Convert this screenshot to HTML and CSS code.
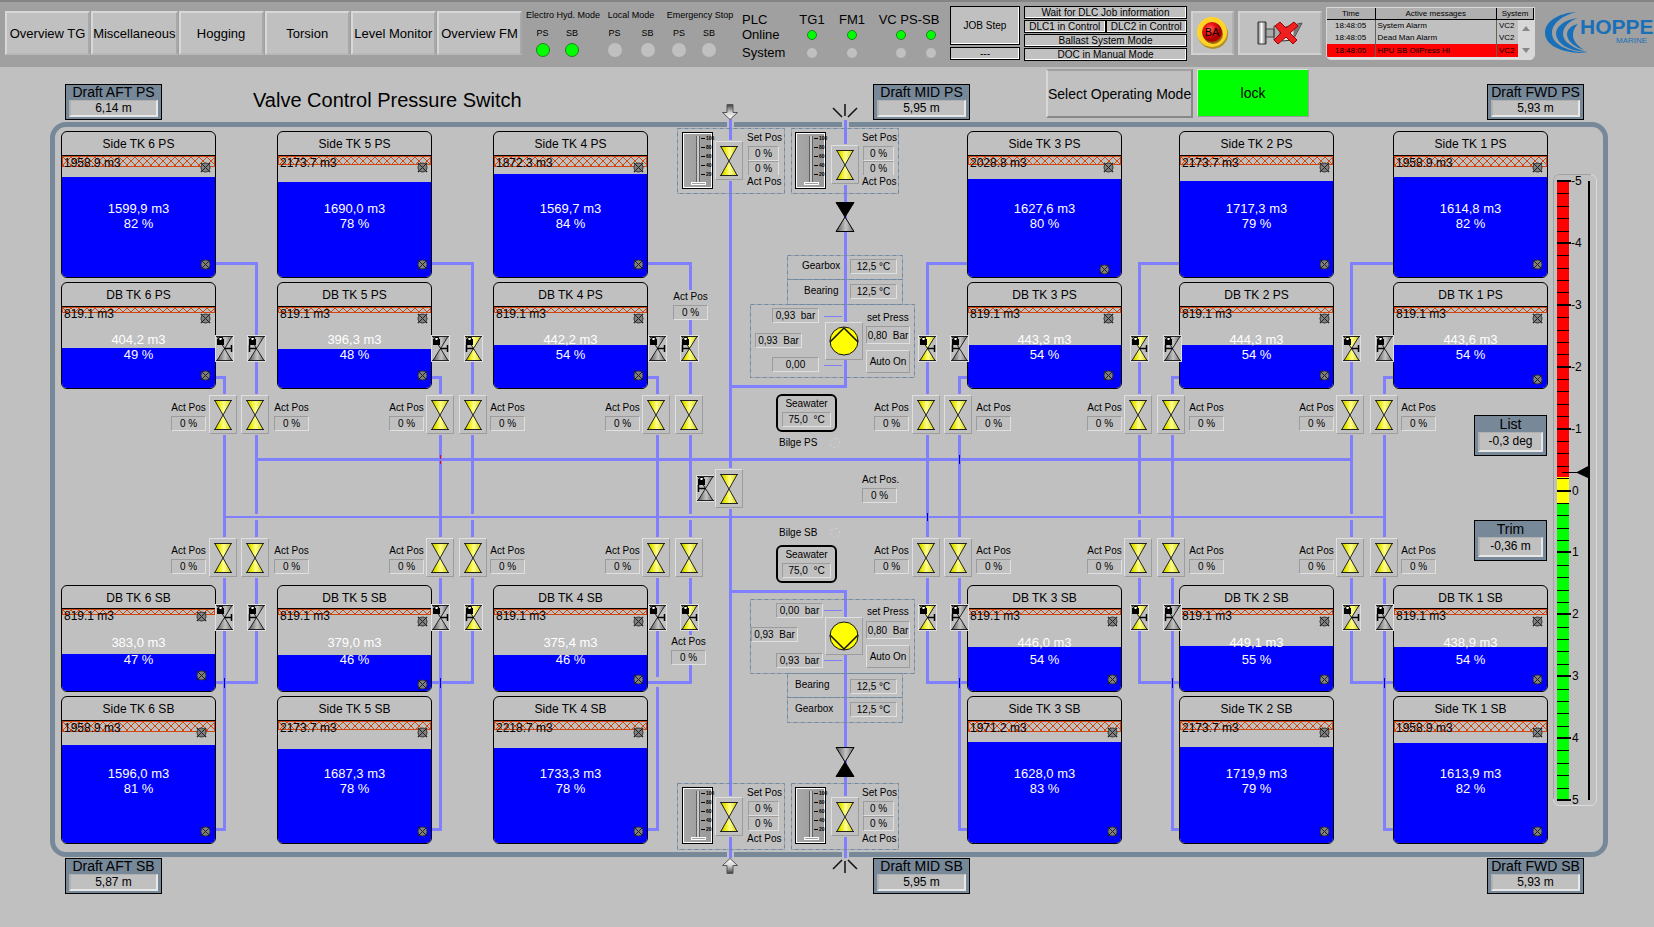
FILE: index.html
```html
<!DOCTYPE html>
<html lang="en">
<head>
<meta charset="utf-8">
<title>Valve Control Pressure Switch</title>
<link rel="stylesheet" href="styles.css">
</head>
<body>
<svg class="defs" width="0" height="0" aria-hidden="true">
  <defs>
    <linearGradient id="g-yellow"><stop offset="0" stop-color="#b8b800"/><stop offset=".25" stop-color="#e8e800"/><stop offset=".55" stop-color="#ffff90"/><stop offset="1" stop-color="#d0d000"/></linearGradient>
    <linearGradient id="g-gray"><stop offset="0" stop-color="#585858"/><stop offset=".55" stop-color="#c4c4c4"/><stop offset="1" stop-color="#707070"/></linearGradient>
    <linearGradient id="g-arrow" x2="0" y2="1"><stop offset="0" stop-color="#404040"/><stop offset=".55" stop-color="#d8d8d8"/><stop offset="1" stop-color="#ffffff"/></linearGradient>
    <linearGradient id="g-arrow-up" x2="0" y2="1"><stop offset="0" stop-color="#ffffff"/><stop offset=".45" stop-color="#d8d8d8"/><stop offset="1" stop-color="#404040"/></linearGradient>
    <linearGradient id="g-horn"><stop offset="0" stop-color="#777"/><stop offset=".45" stop-color="#fff"/><stop offset="1" stop-color="#666"/></linearGradient>
    <radialGradient id="g-red" cx=".4" cy=".35"><stop offset="0" stop-color="#ff7060"/><stop offset=".5" stop-color="#f01818"/><stop offset="1" stop-color="#b00000"/></radialGradient>
    <pattern id="cross" width="8" height="8" patternUnits="userSpaceOnUse"><path d="M0 0l8 8M8 0l-8 8" stroke="#d04810"/></pattern>
  </defs>
</svg>

<header class="topbar">
  <nav class="tabs">
    <button>Overview TG</button>
    <button>Miscellaneous</button>
    <button>Hogging</button>
    <button>Torsion</button>
    <button>Level Monitor</button>
    <button>Overview FM</button>
  </nav>

  <div class="modes">
    <div class="mode electro"><h2>Electro Hyd. Mode</h2>
      <div class="lamp-col">PS<i class="lamp on"></i></div><div class="lamp-col">SB<i class="lamp on"></i></div></div>
    <div class="mode local"><h2>Local Mode</h2>
      <div class="lamp-col">PS<i class="lamp"></i></div><div class="lamp-col">SB<i class="lamp"></i></div></div>
    <div class="mode stop"><h2>Emergency Stop</h2>
      <div class="lamp-col">PS<i class="lamp"></i></div><div class="lamp-col">SB<i class="lamp"></i></div></div>
  </div>

  <table class="plc">
    <thead><tr><th>PLC</th><th>TG1</th><th>FM1</th><th>VC PS-SB</th></tr></thead>
    <tbody>
      <tr><th>Online</th><td><i class="lamp small on"></i></td><td><i class="lamp small on"></i></td><td class="pair"><i class="lamp small on"></i><i class="lamp small on"></i></td></tr>
      <tr><th>System</th><td><i class="lamp small"></i></td><td><i class="lamp small"></i></td><td class="pair"><i class="lamp small"></i><i class="lamp small"></i></td></tr>
    </tbody>
  </table>

  <div class="job">
    <button class="cell job-step">JOB Step</button>
    <div class="cell">---</div>
  </div>

  <div class="dlc">
    <div class="cell wide">Wait for DLC Job information</div>
    <div class="cell">DLC1 in Control</div>
    <div class="cell">DLC2 in Control</div>
    <div class="cell wide">Ballast System Mode</div>
    <div class="cell wide">DOC in Manual Mode</div>
  </div>

  <button class="raised ba" aria-label="BA">
    <svg width="34" height="34" viewBox="0 0 34 34"><circle cx="17" cy="18" r="15" fill="#b09020"/><circle cx="16" cy="16" r="15" fill="#ffd428"/><circle cx="17" cy="18" r="10" fill="#a06010"/><circle cx="16" cy="16" r="10" fill="url(#g-red)"/><text x="16" y="20" text-anchor="middle" class="ba-text">BA</text></svg>
  </button>

  <button class="raised horn" aria-label="Silence horn">
    <svg width="50" height="28" viewBox="0 0 50 28">
      <path d="M3 3h8v22h-8z" fill="url(#g-horn)" stroke="#333"/>
      <path d="M11 10h8v8h-8zM19 7h6v14h-6z" fill="#aaa" stroke="#444"/>
      <path d="M27 9l20-5-9 17-11 1z" fill="#e4e4e4" stroke="#333"/>
      <path d="M39 7l8-3-9 17z" fill="#777"/>
      <path d="M20 7l5-4 6 6 8-6 4 4-8 7 7 7-4 4-7-7-8 7-4-4 7-7z" fill="#f02020" stroke="#a00000"/>
    </svg>
  </button>

  <div class="messages">
    <table>
      <thead><tr><th class="c-time">Time</th><th>Active messages</th><th class="c-sys">System</th></tr></thead>
      <tbody>
        <tr><td>18:48:05</td><td>System Alarm</td><td>VC2</td></tr>
        <tr><td>18:48:05</td><td>Dead Man Alarm</td><td>VC2</td></tr>
        <tr class="alarm"><td>18:48:05</td><td>HPU SB OilPress HI</td><td>VC2</td></tr>
      </tbody>
    </table>
    <div class="scroller"><button aria-label="Scroll up"></button><button class="down" aria-label="Scroll down"></button></div>
  </div>

  <div class="logo">
    <svg width="46" height="42" viewBox="0 0 46 42"><g fill="#1a70b8">
      <path d="M32 0C12 1 0 10 0 21c0 12 16 21 44 20C24 40 7 33 7 21 7 11 18 3 32 0z"/>
      <path d="M33 6C18 8 11 15 11 22c1 10 13 17 31 18-14-4-24-10-24-18 0-7 6-13 15-16z"/>
      <path d="M33 12c-8 2-11 6-11 11 1 7 8 12 17 15-7-5-11-9-11-15 0-5 2-8 5-11z"/></g></svg>
    <div class="logo-text"><strong>HOPPE</strong><span>MARINE</span></div>
  </div>
</header>

<main>
  <section class="row-top">
    <div class="draft"><h2>Draft AFT PS</h2><output>6,14 m</output></div>
    <h1>Valve Control Pressure Switch</h1>
    <div class="draft"><h2>Draft MID PS</h2><output>5,95 m</output></div>
    <div class="mode-buttons"><button class="raised select-mode">Select Operating Mode</button><button class="raised lock">lock</button></div>
    <div class="draft"><h2>Draft FWD PS</h2><output>5,93 m</output></div>
  </section>

  <section class="hull" id="hull">
    <svg class="pipes" id="pipes" viewBox="55 127 1548 725" preserveAspectRatio="none" aria-hidden="true"></svg>
  </section>

  <section class="row-bottom">
    <div class="draft"><h2>Draft AFT SB</h2><output>5,87 m</output></div>
    <div class="draft"><h2>Draft MID SB</h2><output>5,95 m</output></div>
    <div class="draft"><h2>Draft FWD SB</h2><output>5,93 m</output></div>
  </section>
</main>
<script src="mimic.js"></script>
</body>
</html>
```
FILE: styles.css
```css
:root {
  --bg: #c0c0c0;
  --bar: #a0a0a0;
  --slate: #778899;
  --pipe: #8080ff;
  --light: #e0e0e0;
  --dark: #9c9c9c;
}

* { box-sizing: border-box; }

body {
  margin: 0;
  background: var(--bg);
  color: #000;
  font-family: "Liberation Sans", Arial, sans-serif;
  font-size: 10px;
  overflow-x: hidden;
}

h1, h2, h3, p { margin: 0; font-weight: normal; }

button, input {
  font: inherit;
  color: inherit;
  margin: 0;
  padding: 0;
  border-radius: 0;
}

svg { display: block; }
.defs { position: absolute; }

.raised, .tabs button, .valve, .pump {
  background: var(--bg);
  border: 1px solid;
  border-color: var(--light) var(--dark) var(--dark) var(--light);
}

/* ---- top bar ---- */
.topbar {
  display: grid;
  grid-template-columns: minmax(517px, 1fr) 212px 204px 70px 163px 43px 84px 209px 115px;
  gap: 4px;
  align-items: center;
  min-height: 67px;
  padding: 0 0 3px 5px;
  border-top: 2px solid #848484;
  background: var(--bar);
}

.tabs { display: grid; grid-template-columns: repeat(6, 1fr); gap: 1px; }
.tabs button {
  height: 44px;
  border-width: 2px;
  font-size: 13px;
  white-space: nowrap;
  border-color: #d8d8d8 #a8a8a8 #b8b8b8 #d8d8d8;
}

.modes { display: flex; font-size: 9px; line-height: 12px; }
.mode { display: grid; row-gap: 6px; }
.electro { grid-template-columns: 33px 26px 13px; }
.local { grid-template-columns: 33px 33px; }
.stop { grid-template-columns: 30px 30px 12px; }
.mode h2 { grid-column: 1 / -1; font-size: 9px; white-space: nowrap; text-align: center; }
.lamp-col { display: grid; justify-items: center; gap: 4px; }
.lamp {
  display: inline-block;
  width: 14px;
  height: 14px;
  border-radius: 50%;
  background: var(--bg);
}
.lamp.small { width: 10px; height: 10px; vertical-align: middle; }
.lamp.on { background: #00ff00; border: 1px solid #208020; }

.plc { border-collapse: collapse; font-size: 13px; line-height: 15px; table-layout: fixed; width: 204px; margin-top: 5px; }
.plc th, .plc td { padding: 0; font-weight: normal; text-align: center; white-space: nowrap; }
.plc th:first-child { text-align: left; width: 50px; }
.plc thead th:nth-child(2), .plc thead th:nth-child(3) { width: 40px; }
.plc tbody tr:last-child > * { padding-top: 3px; }
.plc .pair { padding-left: 14px; }
.plc .pair .lamp:first-child { margin-right: 20px; }

.cell {
  display: flex;
  align-items: center;
  justify-content: center;
  height: 13px;
  background: var(--bg);
  border: 1px solid #000;
  box-shadow: inset -1px -1px #fff;
  white-space: nowrap;
  font-size: 10px;
}
.job { display: grid; gap: 2px; }
.job-step { height: 39px; }
.dlc { display: grid; grid-template-columns: 1fr 1fr; row-gap: 1px; }
.dlc .wide { grid-column: 1 / 3; }

.ba, .horn { display: flex; align-items: center; justify-content: center; height: 44px; border-width: 2px; border-color: #d0d0d0 #b0b0b0 #d0d0d0 #d0d0d0; }
.ba-text { font-size: 11px; }

.messages {
  display: flex;
  height: 53px;
  background: #e0e0e0;
  border: 1px solid #d8d8d8;
  border-radius: 0 0 5px 5px;
  overflow: hidden;
  position: relative;
}
.messages table { width: 100%; height: 49px; border-collapse: collapse; table-layout: fixed; font-size: 8px; line-height: 11px; }
.messages th, .messages td { padding: 0 2px; height: 12px; border-right: 1px solid #606060; background: var(--bg); white-space: nowrap; overflow: hidden; }
.messages th { background: #b0b0b0; border-bottom: 1px solid #000; border-right-color: #000; font-weight: normal; }
.messages td:first-child { padding-left: 8px; }
.messages .c-time { width: 48px; }
.messages .c-sys { width: 37px; }
.messages .alarm td { background: #ff0000; }
.scroller {
  position: absolute;
  right: 0;
  top: 12px;
  bottom: 0;
  width: 16px;
  display: flex;
  flex-direction: column;
  justify-content: space-between;
  align-items: center;
  padding: 6px 0;
  background: #d8d8d8;
}
.scroller button { width: 0; height: 0; border: 4px solid transparent; border-top: 0; border-bottom: 5px solid #888; background: none; }
.scroller .down { border-top: 5px solid #888; border-bottom: 0; }

.logo { display: flex; align-items: center; padding-left: 6px; overflow: hidden; color: #1a70b8; }
.logo svg { flex: none; }
.logo-text { display: grid; margin-left: -11px; padding-bottom: 4px; }
.logo-text strong { font-size: 21px; line-height: 20px; }
.logo-text span { font-size: 8px; line-height: 8px; padding-left: 36px; }

/* ---- rows above and below the hull ---- */
.row-top, .row-bottom { display: grid; padding: 0 70px 0 65px; justify-items: start; }
.row-top { grid-template-columns: 188fr 620fr 173fr 441fr 97px; height: 55px; align-items: end; padding-bottom: 2px; }
.row-bottom { grid-template-columns: 808fr 614fr 97px; padding-top: 1px; padding-bottom: 33px; }
h1 { font-size: 20px; line-height: 22px; padding-bottom: 9px; white-space: nowrap; }

.draft {
  width: 97px;
  padding: 0 3px 2px;
  background: var(--slate);
  border: 1px solid #000;
  text-align: center;
}
.draft h2 { font-size: 14px; line-height: 15px; white-space: nowrap; }
.draft output {
  display: block;
  height: 17px;
  font-size: 12px;
  line-height: 14px;
  background: var(--bg);
  border: 2px solid;
  border-color: #b0b0b0 #e8e8e8 #e8e8e8 #b0b0b0;
  border-top-width: 1px;
}
.draft.narrow { width: 73px; padding-bottom: 3px; }
.draft.narrow h2 { line-height: 16px; }
.draft.narrow output { height: 20px; line-height: 17px; }

.mode-buttons { display: flex; gap: 4px; align-self: start; padding-top: 2px; font-size: 14px; }
.select-mode { width: 147px; height: 49px; border-width: 2px; white-space: nowrap; border-color: #a0a0a0 #888 #888 #d8d8d8; }
.lock { width: 112px; height: 48px; background: #00ff00; }

/* ---- hull mimic ---- */
.hull {
  position: relative;
  height: 735px;
  margin: 0 46px 0 50px;
  border: 5px solid var(--slate);
  border-radius: 16px;
}
.pipes { position: absolute; inset: 0; width: 100%; height: 100%; overflow: visible; fill: none; stroke: var(--pipe); stroke-width: 3; }
.pipes .thin { stroke-width: 2; }
.pipes .hair { stroke-width: 1; }
.pipes .gap { stroke: var(--bg); stroke-width: 4; }
.pipes .notch { stroke: var(--bg); stroke-width: 5; }
.pipes .tick { stroke: #0000c0; stroke-width: 1; }
.pipes .tick.red { stroke: #ff0000; stroke-dasharray: 4 2; }
.pipes .frame { stroke: #7088a0; stroke-width: 1; stroke-dasharray: 4 1 1 1; }

.node { position: absolute; }

.tank {
  width: 155px;
  height: 147px;
  background: var(--bg);
  border: 1px solid #000;
  border-radius: 6px;
  overflow: hidden;
  font-size: 12px;
}
.tank.side.sb { height: 148px; }
.tank.db { height: 107px; }
.tank h3 { height: 24px; border-bottom: 1px solid #000; font-size: 12px; line-height: 24px; text-align: center; }
.tank-body { position: relative; height: 121px; }
.side.sb .tank-body { height: 122px; }
.tank.db .tank-body { height: 81px; }
.db.sb h3 { height: 23px; }
.tank.db.sb .tank-body { height: 82px; }
.hatch { display: block; width: 100%; height: 11px; border: 1px solid #d04810; }
.hatch.mid { height: 9px; }
.hatch.slim { height: 6px; }
.capacity { position: absolute; left: 2px; top: -1px; line-height: 16px; }
.fill { position: absolute; left: 0; right: 0; bottom: 0; background: #0000ff; }
.reading { position: absolute; left: 0; right: 0; top: 45px; font-size: 13px; line-height: 15px; color: #fff; text-align: center; }
.db .reading { top: 25px; }
.db.sb .reading { line-height: 17px; }

.valve { display: flex; align-items: center; justify-content: center; width: 28px; height: 39px; box-shadow: 0 0 0 1px var(--bg); }
.lockvalve { width: 19px; height: 27px; background: var(--bg); border: 1px solid var(--light); display: flex; align-items: center; justify-content: center; }
.pump { display: flex; align-items: center; justify-content: center; width: 38px; height: 38px; }

.label { line-height: 14px; white-space: pre; background: var(--bg); }
.value {
  width: 47px;
  height: 15px;
  line-height: 13px;
  background: var(--bg);
  border: 1px solid;
  border-color: var(--dark) var(--light) var(--light) var(--dark);
  text-align: center;
  white-space: pre;
  display: block;
}
.value.small { width: 31px; }
.value.tall { width: 44px; height: 18px; line-height: 16px; }
.auto { width: 44px; height: 23px; }
.readout { width: 35px; display: grid; gap: 1px; background: var(--bg); }
.readout .label { text-align: center; }
.readout .value { width: 35px; }

.seawater { width: 61px; height: 38px; padding: 1px 4px; border: 2px solid #000; border-radius: 6px; text-align: center; }
.seawater .value { width: 49px; margin-top: 1px; }
.bilge-lamp { width: 10px; height: 10px; border: 1px dashed #d0d0d0; border-radius: 50%; }

.slider {
  display: flex;
  width: 31px;
  height: 57px;
  border: 1px solid #000;
  box-shadow: inset -1px -1px #fff, inset 1px 1px #fff;
  background: linear-gradient(90deg, #a8a8a8, #989898);
}
.slider input {
  appearance: none;
  writing-mode: vertical-lr;
  direction: rtl;
  width: 16px;
  height: 49px;
  margin: 3px 0 0 7px;
  background: linear-gradient(90deg, transparent 6px, #606060 6px 7px, #c8c8c8 7px 9px, #606060 9px 10px, transparent 10px);
}
.slider input::-webkit-slider-thumb { appearance: none; width: 15px; height: 3px; background: #a0a0a0; border: 1px solid #fff; }
.scale { display: flex; flex-direction: column; margin-left: -5px; padding-top: 1px; font-size: 5px; line-height: 9px; font-weight: bold; }
.scale span { display: flex; align-items: center; height: 9px; }
.scale span::before { content: ""; width: 4px; height: 1px; margin-right: 1px; background: #000; }

.gauge-text { font-size: 12px; }
```
FILE: mimic.js
```js
// Drawing space of the mimic: the inside of the hull frame.
const ORIGIN = { x: 55, y: 127, width: 1548 };
const hull = document.getElementById('hull');
const pipes = document.getElementById('pipes');

function place(markup, x, y) {
  const holder = document.createElement('div');
  holder.innerHTML = markup.trim();
  const node = holder.firstElementChild;
  node.classList.add('node');
  node.style.left = ((x - ORIGIN.x) / ORIGIN.width) * 100 + '%';
  node.style.top = y - ORIGIN.y + 'px';
  hull.appendChild(node);
}

function pipe(d, cls = '') {
  const path = document.createElementNS('http://www.w3.org/2000/svg', 'path');
  path.setAttribute('d', d);
  if (cls) path.setAttribute('class', cls);
  pipes.appendChild(path);
}

// ---- icons ----
const hourglass = (fill) => `<svg width="18" height="30" viewBox="0 0 18 30">
  <path d="M0.5 .5h17L9 15z" fill="url(#g-${fill})"/><path d="M9 15l8.500 14.500h-17z" fill="url(#g-${fill})"/>
  <path d="M0 .5h18M0 29.500h18M.5 0L9 15l8.500-15M.5 30L9 15l8.500 15" fill="none" stroke="#222"/></svg>`;

const lockIcon = (fill, handle) => `<svg width="17" height="25" viewBox="0 0 17 25">
  <path d="M1 .5h15L8.500 12.500z" fill="url(#g-${fill})"/><path d="M8.500 12.500l7.500 12h-15z" fill="url(#g-${fill})"/>
  <path d="M0 .5h17M0 24.500h17M1 .5l7.500 12 7.500-12M1 24.500l7.500-12 7.500 12" fill="none" stroke="#222"/>
  <path d="${handle === 'right' ? 'M8 12.500h8M15.500 9v7' : 'M9 12.500h-8M1.500 9v7'}" fill="none" stroke="#000" stroke-width="1.500"/>
  <path d="M1 3h7v6h-7z" fill="#000"/><path d="M3 3.500v-2h3.500v2" fill="none" stroke="#000"/><path d="M3.500 2h2v2h-2z" fill="#fff"/></svg>`;

const sensor = `<svg width="11" height="11" viewBox="0 0 11 11">
  <path d="M1 1l9 9M10 1l-9 9" stroke="#202020" stroke-width="1.500"/>
  <circle cx="5.500" cy="5.500" r="4.500" fill="#808080" stroke="#303030"/>
  <path d="M2 2l7 7M9 2l-7 7" stroke="#202020"/></svg>`;

const checkValve = (blackTop) => `<svg width="20" height="30" viewBox="0 0 20 30">
  <path d="M1 .5h18L10 15z" fill="${blackTop ? '#000' : 'url(#g-gray)'}" stroke="#000"/>
  <path d="M1 29.500h18L10 15z" fill="${blackTop ? 'url(#g-gray)' : '#000'}" stroke="#000"/></svg>`;

const pumpIcon = (chevron) => `<svg width="30" height="30" viewBox="0 0 30 30">
  <circle cx="15" cy="15" r="14" fill="#ffff00" stroke="#111"/><path d="${chevron}" fill="none" stroke="#111" stroke-width="1.500"/></svg>`;

const inletArrow = (d, paint) => `<svg width="16" height="16" viewBox="0 0 16 16"><path d="${d}" fill="url(#${paint})" stroke="#555"/></svg>`;
const outlet = (d) => `<svg width="26" height="14" viewBox="0 0 26 14"><path d="${d}" fill="none" stroke="#111" stroke-width="1.500"/></svg>`;

// ---- columns of tanks ----
// a: pipe of the lower PS and lower SB tank, b: pipe of the upper PS tank and upper SB tank
const columns = [
  { n: 6, x: 61,   left: true,  a: 224.5,  b: 256.5,  va: 209,  vb: 241,  la: 215,  lb: 247,  ra: 171,  rb: 274,  bColor: 'gray',   bHand: 'left' },
  { n: 5, x: 277,  left: true,  a: 440.5,  b: 472.5,  va: 426,  vb: 459,  la: 431,  lb: 464,  ra: 389,  rb: 490,  bColor: 'yellow', bHand: 'left' },
  { n: 4, x: 493,  left: true,  a: 657.5,  b: 690.5,  va: 642,  vb: 675,  la: 648,  lb: 680,  ra: 605,  rb: null, bColor: 'yellow', bHand: 'left' },
  { n: 3, x: 967,  left: false, a: 959.5,  b: 927.5,  va: 944,  vb: 912,  la: 950,  lb: 918,  ra: 976,  rb: 874,  bColor: 'yellow', bHand: 'right' },
  { n: 2, x: 1179, left: false, a: 1172.5, b: 1139.5, va: 1157, vb: 1124, la: 1163, lb: 1130, ra: 1189, rb: 1087, bColor: 'yellow', bHand: 'right' },
  { n: 1, x: 1393, left: false, a: 1384.5, b: 1351.5, va: 1370, vb: 1336, la: 1375, lb: 1342, ra: 1401, rb: 1299, bColor: 'yellow', bHand: 'right' },
];

// [column, row, capacity, volume, percent, fill height, hatch, sensors x1, y1, x2, y2]
const tanks = [
  [6, 'Side PS', '1958.9', '1599,9', 82, 100, '', 144, 36, 144, 133],
  [5, 'Side PS', '2173.7', '1690,0', 78, 95, 'mid', 145, 36, 145, 133],
  [4, 'Side PS', '1872.3', '1569,7', 84, 103, '', 145, 36, 145, 133],
  [3, 'Side PS', '2028.8', '1627,6', 80, 98, 'mid', 141, 36, 137, 138],
  [2, 'Side PS', '2173.7', '1717,3', 79, 96, 'mid', 145, 36, 145, 133],
  [1, 'Side PS', '1958.9', '1614,8', 82, 100, '', 144, 36, 144, 133],
  [6, 'DB PS', '819.1', '404,2', 49, 40, 'slim', 144, 36, 144, 93],
  [5, 'DB PS', '819.1', '396,3', 48, 39, 'slim', 145, 36, 145, 93],
  [4, 'DB PS', '819.1', '442,2', 54, 43, 'slim', 145, 36, 145, 93],
  [3, 'DB PS', '819.1', '443,3', 54, 43, 'slim', 141, 36, 141, 93],
  [2, 'DB PS', '819.1', '444,3', 54, 43, 'slim', 145, 36, 145, 93],
  [1, 'DB PS', '819.1', '443,6', 54, 43, 'slim', 144, 36, 144, 97],
  [6, 'DB SB', '819.1', '383,0', 47, 37, 'slim', 140, 31, 140, 90],
  [5, 'DB SB', '819.1', '379,0', 46, 36, 'slim', 145, 36, 145, 99],
  [4, 'DB SB', '819.1', '375,4', 46, 36, 'slim', 145, 36, 145, 94],
  [3, 'DB SB', '819.1', '446,0', 54, 44, 'slim', 145, 36, 145, 94],
  [2, 'DB SB', '819.1', '449,1', 55, 45, 'slim', 145, 36, 145, 94],
  [1, 'DB SB', '819.1', '438,9', 54, 44, 'slim', 144, 36, 144, 94],
  [6, 'Side SB', '1958.9', '1596,0', 81, 98, '', 140, 36, 144, 135],
  [5, 'Side SB', '2173.7', '1687,3', 78, 94, 'mid', 145, 36, 145, 135],
  [4, 'Side SB', '2218.7', '1733,3', 78, 95, 'mid', 145, 36, 145, 135],
  [3, 'Side SB', '1971.2', '1628,0', 83, 101, '', 145, 36, 145, 135],
  [2, 'Side SB', '2173.7', '1719,9', 79, 96, 'mid', 145, 36, 145, 135],
  [1, 'Side SB', '1958.9', '1613,9', 82, 100, '', 144, 36, 144, 135],
];
const rowTop = { 'Side PS': 131, 'DB PS': 282, 'DB SB': 585, 'Side SB': 696 };

// ---- pipes ----
for (const c of columns) {
  const edge = c.left ? c.x + 155 : c.x;
  pipe(`M${edge} 263.5H${c.b}V682.500H${edge}`);
  pipe(`M${edge} 377.5H${c.a}V829.500H${edge}`);
  if (c.n !== 3) pipe(`M${c.b} 514V520`, 'gap');
}
pipe('M256.500 459.500H1351.500');
pipe('M224.500 517H1384.500', 'thin');
pipe('M657.500 677V687', 'gap');
pipe('M648 682.500H690');
for (const x of [224.5, 440.5, 959.5, 1172.5, 1384.5]) pipe(`M${x} 678V688`, 'tick');
pipe('M959.500 455V464M927.500 513V521', 'tick');
pipe('M440.500 455V464', 'tick red');
pipe('M727 124.500H734M842 124.500H849M727 854.500H734M842 854.500H849', 'notch');
pipe('M730.500 119V858M845.500 120V386.500H730.500M730.500 591.500H845.500V858');
pipe('M824 316.500H842M824 365.500H842M824 610.500H842M824 660.500H842', 'hair');

// dash-dot group frames
const frame = (x, y, w, h) => pipe(`M${x + .5} ${y + .5}h${w}v${h}h${-w}z`, 'frame');
for (const y of [128, 783]) { frame(677, y, 107, y === 128 ? 65 : 66); frame(791, y, 107, y === 128 ? 65 : 66); }
frame(787, 255, 115, 24); frame(787, 279, 115, 25); frame(750, 304, 164, 73);
frame(750, 599, 164, 74); frame(787, 673, 115, 24); frame(787, 697, 115, 25);

// ---- tanks ----
for (const [n, row, cap, vol, pct, fill, hatch, x1, y1, x2, y2] of tanks) {
  const [kind, side] = row.split(' ');
  const x = columns.find((c) => c.n === n).x;
  const y = rowTop[row];
  place(`<article class="tank ${kind.toLowerCase()} ${side.toLowerCase()}"><h3>${kind} TK ${n} ${side}</h3>
    <div class="tank-body"><svg class="hatch ${hatch}" aria-hidden="true"><rect width="100%" height="100%" fill="url(#cross)"/></svg><div class="fill" style="height:${fill}px"></div>
    <span class="capacity">${cap} m3</span><div class="reading"><p>${vol} m3</p><p>${pct} %</p></div></div></article>`, x, y);
  place(sensor, x + x1 - 5, y + y1 - 5);
  place(sensor, x + x2 - 5, y + y2 - 5);
}

// ---- valves and position readouts ----
const valve = (x, y) => place(`<button class="valve" aria-label="Valve">${hourglass('yellow')}</button>`, x, y);
const lockValve = (x, y, fill, hand) => place(`<button class="lockvalve" aria-label="Locked valve">${lockIcon(fill, hand)}</button>`, x, y);
const readout = (x, y, text = 'Act Pos') => place(`<div class="readout"><span class="label">${text}</span><output class="value">0 %</output></div>`, x, y);
const label = (text, x, y) => place(`<span class="label">${text}</span>`, x, y);
const value = (text, x, y, cls = '') => place(`<output class="value ${cls}">${text}</output>`, x, y);
const entry = (text, name, x, y, cls = '') => place(`<input class="value ${cls}" value="${text}" aria-label="${name}">`, x, y);

for (const c of columns) {
  for (const [vy, ly, ry] of [[395, 335, 401], [538, 604, 544]]) {
    valve(c.va, vy);
    valve(c.vb, vy);
    lockValve(c.la, ly, 'gray', c.left ? 'right' : 'left');
    lockValve(c.lb, ly, c.bColor, c.n === 4 && ly === 604 ? 'right' : c.bHand);
    readout(c.ra, ry);
    if (c.rb) readout(c.rb, ry);
  }
}
readout(673, 290);
readout(671, 635);
readout(862, 473, 'Act Pos.');

lockValve(696, 475, 'gray', 'left');
valve(715, 469);

// ---- sea chest and overboard stations ----
const slider = `<div class="slider"><input type="range" min="0" max="100" value="0" aria-label="Set position">
  <div class="scale"><span>100</span><span>80</span><span>60</span><span>40</span><span>20</span></div></div>`;
for (const [x, top, vy] of [[677, 128, 141], [791, 128, 145], [677, 788, 797], [791, 788, 797]]) {
  const second = x === 791;
  const shift = second ? 115 : 0;
  place(slider, second ? 795 : 682, top === 128 ? 132 : 787);
  valve(second ? 831 : 715, vy);
  label('Set Pos', 747 + shift, top + 3 - (top === 788 ? 5 : 0));
  entry('0 %', 'Set Pos', 748 + shift, top === 128 ? 146 : 801, 'small');
  value('0 %', 748 + shift, top === 128 ? 161 : 816, 'small');
  label('Act Pos', 747 + shift, top === 128 ? 175 : 832);
}
place(inletArrow('M5 .5h6v8h4.500l-7.500 7-7.500-7h4.500z', 'g-arrow'), 722, 104);
place(inletArrow('M5 15.500h6v-8h4.500l-7.500-7-7.500 7h4.500z', 'g-arrow-up'), 722, 858);
place(outlet('M1 4l9 9M13 0v12M25 4l-9 9'), 832, 104);
place(outlet('M1 10l9-9M13 2v12M25 10l-9-9'), 832, 859);
place(checkValve(true), 835, 202);
place(checkValve(false), 835, 747);

// ---- pumps ----
place(`<button class="pump" aria-label="Pump PS">${pumpIcon('M1 16L15 2l14 14')}</button>`, 825, 322);
label('Gearbox', 802, 259); value('12,5 °C', 850, 259);
label('Bearing', 804, 284); value('12,5 °C', 850, 284);
value('0,93  bar', 772, 308);
value('0,93  Bar', 755, 333);
value('0,00', 772, 357);
label('set Press', 867, 311);
entry('0,80  Bar', 'set Press', 866, 326, 'tall');
place('<button class="raised auto">Auto On</button>', 866, 350);

place(`<button class="pump" aria-label="Pump SB">${pumpIcon('M1 14l14 14l14-14')}</button>`, 825, 617);
label('Bearing', 795, 678); value('12,5 °C', 850, 679);
label('Gearbox', 795, 702); value('12,5 °C', 850, 702);
value('0,00  bar', 776, 603);
value('0,93  Bar', 751, 627);
value('0,93  bar', 776, 653);
label('set Press', 867, 605);
entry('0,80  Bar', 'set Press', 866, 621, 'tall');
place('<button class="raised auto">Auto On</button>', 866, 645);

for (const [y, by, name] of [[394, 436, 'Bilge PS'], [545, 526, 'Bilge SB']]) {
  place('<div class="seawater"><span class="label">Seawater</span><output class="value">75,0  °C</output></div>', 776, y);
  label(name, 779, by);
  place('<i class="bilge-lamp"></i>', 830, by + 2);
}

// ---- list and trim ----
place('<div class="draft narrow"><h2>List</h2><output>-0,3 deg</output></div>', 1474, 415);
place('<div class="draft narrow"><h2>Trim</h2><output>-0,36 m</output></div>', 1474, 520);

let marks = '';
for (let i = 0; i <= 50; i++) {
  const y = Math.round(7 + i * 12.38);
  const major = i % 5 === 0;
  marks += `<path d="M4 ${y + (major ? 0 : .5)}h${major ? 14 : 12}" stroke="#000" stroke-width="${major ? 2 : 1}"/>`;
  if (major) marks += `<text x="${i < 25 ? 18 : 19}" y="${y + 4}" class="gauge-text">${i / 5 - 5}</text>`;
}
place(`<svg width="45" height="632" viewBox="0 0 45 632">
  <rect x=".5" y=".5" width="43" height="631" rx="6" fill="none" stroke="#dcdcdc"/>
  <path d="M.5 625V7Q.5 .5 7 .5H38" fill="none" stroke="#a0a0a0"/>
  <path d="M4 7h12v296h-12z" fill="#f00"/><path d="M4 303h12v26h-12z" fill="#ff0"/><path d="M4 329h12v297h-12z" fill="#0f0"/>
  ${marks}
  <path d="M36 7V626" stroke="#000" stroke-width="2"/><path d="M9 298.500H24" stroke="#000"/><path d="M37 291v14l-14-6.500z" fill="#000"/></svg>`, 1553, 174);
```
